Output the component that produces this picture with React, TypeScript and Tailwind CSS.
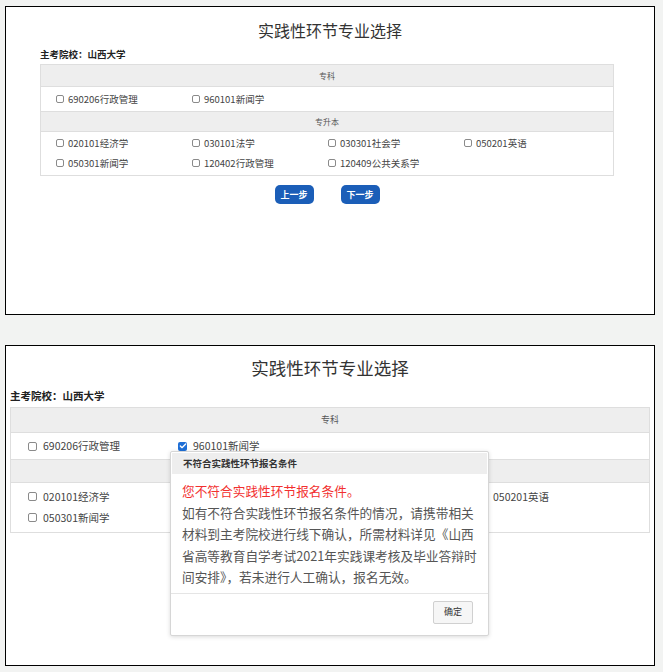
import { Check } from 'lucide-react'

const zhuanke = ['690206行政管理', '960101新闻学']
const zhuanshengben = [
  '020101经济学',
  '030101法学',
  '030301社会学',
  '050201英语',
  '050301新闻学',
  '120402行政管理',
  '120409公共关系学',
]

const tishi = [
  '如有不符合实践性环节报名条件的情况，请携带相关',
  '材料到主考院校进行线下确认，所需材料详见《山西',
  '省高等教育自学考试2021年实践课考核及毕业答辩时',
  '间安排》，若未进行人工确认，报名无效。',
]

const font = { fontFamily: '"Noto Sans CJK SC", "Noto Sans", sans-serif' }

function Box({ checked, size }: { checked?: boolean; size: 'sm' | 'lg' }) {
  const dim = size === 'sm' ? 'h-[8px] w-[8px]' : 'h-[9px] w-[9px]'
  if (checked)
    return (
      <span className={`${dim} flex shrink-0 items-center justify-center rounded-[2px] bg-[#1f6fd6]`}>
        <Check size={8} strokeWidth={4} className="text-white" />
      </span>
    )
  return <span className={`${dim} shrink-0 rounded-[2px] border border-[#8a8a8a] bg-white`} />
}

function Item({ label, checked, size }: { label: string; checked?: boolean; size: 'sm' | 'lg' }) {
  return (
    <div className={`flex items-center ${size === 'sm' ? 'gap-[4px] text-[9.5px]' : 'gap-[6px] text-[10.5px]'} text-[#444]`}>
      <Box size={size} checked={checked} />
      <span>{label}</span>
    </div>
  )
}

function SmallPanel() {
  return (
    <section className="h-[309px] w-[650px] border border-black bg-white">
      <h1 className="pt-[12px] text-center text-[16px] leading-[22px] text-[#333]">实践性环节专业选择</h1>
      <div className="px-[34px]">
        <p className="mt-[6px] text-[9.5px] font-bold leading-[14px] text-[#222]">主考院校：山西大学</p>
        <div className="mt-[3px] w-[574px] border border-[#dedede]">
          <div className="flex h-[22px] items-center justify-center border-b border-[#dedede] bg-[#eeeeee] text-[8px] text-[#555]">专科</div>
          <div className="grid h-[24px] grid-cols-[136px_136px_136px_136px] items-center pl-[15px]">
            {zhuanke.map((m) => (
              <Item key={m} label={m} size="sm" />
            ))}
          </div>
          <div className="flex h-[21px] items-center justify-center border-y border-[#dedede] bg-[#eeeeee] text-[8px] text-[#555]">专升本</div>
          <div className="grid grid-cols-[136px_136px_136px_136px] auto-rows-[20px] items-center pl-[15px] pt-[1px] pb-[2px]">
            {zhuanshengben.map((m) => (
              <Item key={m} label={m} size="sm" />
            ))}
          </div>
        </div>
        <div className="mt-[9px] flex w-[574px] justify-center gap-[27px]">
          <button className="h-[19px] w-[39px] rounded-[5px] bg-[#1b5eb8] text-[9px] font-bold text-white">上一步</button>
          <button className="h-[19px] w-[39px] rounded-[5px] bg-[#1b5eb8] text-[9px] font-bold text-white">下一步</button>
        </div>
      </div>
    </section>
  )
}

function Modal() {
  return (
    <div className="absolute left-[164px] top-[105px] w-[319px] rounded-[2px] border border-[#d6d6d6] bg-white shadow-[0_1px_4px_rgba(0,0,0,0.15)]">
      <div className="m-[1px] flex h-[21px] items-center bg-[#eeeeee] pl-[11px] text-[9.5px] font-bold text-[#333]">不符合实践性环节报名条件</div>
      <div className="pl-[11px] pt-[5px] pb-[5px] text-[12.7px] leading-[21.5px] text-[#555]">
        <p className="text-[#f2302f]">您不符合实践性环节报名条件。</p>
        {tishi.map((line) => (
          <p key={line} className="whitespace-nowrap">{line}</p>
        ))}
      </div>
      <div className="flex justify-end border-t border-[#e5e5e5] px-[15px] pt-[7px] pb-[11px]">
        <button className="h-[23px] w-[40px] rounded-[2px] border border-[#d0d0d0] bg-[#f6f6f6] text-[9px] text-[#333]">确定</button>
      </div>
    </div>
  )
}

function LargePanel() {
  return (
    <section className="relative mt-[30px] h-[321px] w-[650px] border border-black bg-white">
      <h1 className="pt-[10px] text-center text-[17.5px] leading-[24px] text-[#333]">实践性环节专业选择</h1>
      <div className="px-[4px]">
        <p className="mt-[8px] text-[10.5px] font-bold leading-[16px] text-[#222]">主考院校：山西大学</p>
        <div className="mt-[3px] w-[640px] border border-[#dedede]">
          <div className="flex h-[25px] items-center justify-center border-b border-[#dedede] bg-[#eeeeee] text-[9px] text-[#555]">专科</div>
          <div className="grid h-[26px] grid-cols-[150px_150px_150px_150px] items-center pl-[17px]">
            {zhuanke.map((m, i) => (
              <Item key={m} label={m} size="lg" checked={i === 1} />
            ))}
          </div>
          <div className="flex h-[24px] items-center justify-center border-y border-[#dedede] bg-[#eeeeee] text-[9px] text-[#555]">专升本</div>
          <div className="grid grid-cols-[150px_150px_150px_150px] auto-rows-[21px] items-center pl-[17px] pt-[3px] pb-[4px]">
            {zhuanshengben.map((m) => (
              <Item key={m} label={m} size="lg" />
            ))}
          </div>
        </div>
      </div>
      <Modal />
    </section>
  )
}

export default function App() {
  return (
    <div style={font} className="h-[672px] w-[663px] bg-[#f2f3f2] pl-[5px] pt-[6px]">
      <SmallPanel />
      <LargePanel />
    </div>
  )
}
